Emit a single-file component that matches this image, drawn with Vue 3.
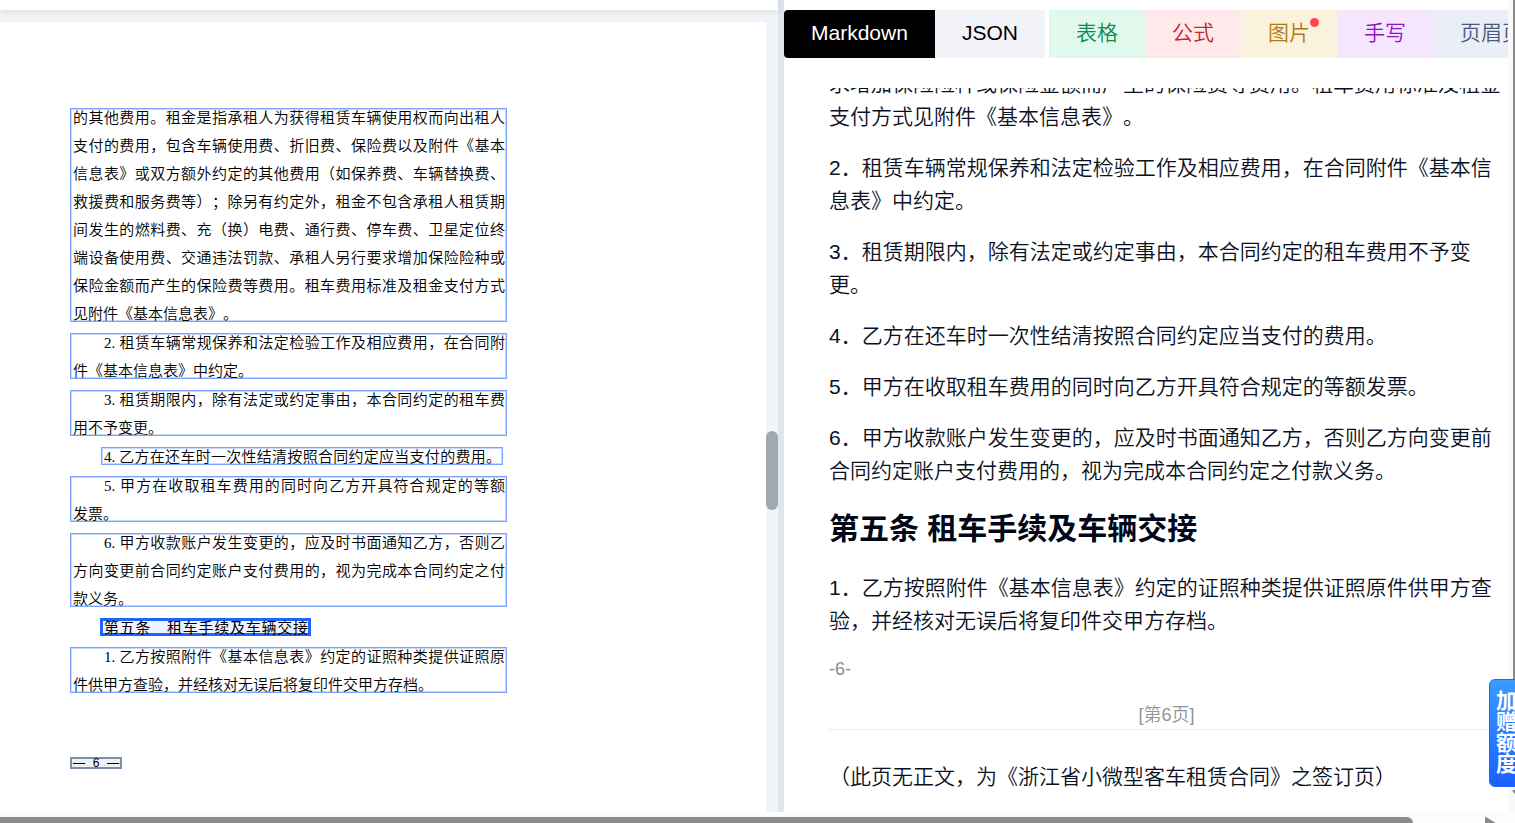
<script setup>
const blocks = [
  {
    kind: 'para',
    lines: [
      '的其他费用。租金是指承租人为获得租赁车辆使用权而向出租人',
      '支付的费用，包含车辆使用费、折旧费、保险费以及附件《基本',
      '信息表》或双方额外约定的其他费用（如保养费、车辆替换费、',
      '救援费和服务费等）；除另有约定外，租金不包含承租人租赁期',
      '间发生的燃料费、充（换）电费、通行费、停车费、卫星定位终',
      '端设备使用费、交通违法罚款、承租人另行要求增加保险险种或',
      '保险金额而产生的保险费等费用。租车费用标准及租金支付方式',
      '见附件《基本信息表》。',
    ],
  },
  {
    kind: 'para indent',
    lines: ['2. 租赁车辆常规保养和法定检验工作及相应费用，在合同附', '件《基本信息表》中约定。'],
  },
  {
    kind: 'para indent',
    lines: ['3. 租赁期限内，除有法定或约定事由，本合同约定的租车费', '用不予变更。'],
  },
  { kind: 'single', lines: ['4. 乙方在还车时一次性结清按照合同约定应当支付的费用。'] },
  {
    kind: 'para indent',
    lines: ['5. 甲方在收取租车费用的同时向乙方开具符合规定的等额', '发票。'],
  },
  {
    kind: 'para indent',
    lines: [
      '6. 甲方收款账户发生变更的，应及时书面通知乙方，否则乙',
      '方向变更前合同约定账户支付费用的，视为完成本合同约定之付',
      '款义务。',
    ],
  },
  { kind: 'title', lines: ['第五条　租车手续及车辆交接'] },
  {
    kind: 'para indent',
    lines: ['1. 乙方按照附件《基本信息表》约定的证照种类提供证照原', '件供甲方查验，并经核对无误后将复印件交甲方存档。'],
  },
]

const filters = [
  { name: '表格', tone: 'green' },
  { name: '公式', tone: 'red' },
  { name: '图片', tone: 'amber', dot: true },
  { name: '手写', tone: 'purple' },
  { name: '页眉页脚', tone: 'slate' },
]
</script>

<template>
  <div class="app">
    <section class="source">
      <div class="topbar"></div>
      <div class="viewer">
        <div class="sheet">
          <div v-for="(b, i) in blocks" :key="i" class="block" :class="b.kind">
            <div class="lines">
              <div v-for="(l, j) in b.lines" :key="j" class="line">{{ l }}</div>
            </div>
          </div>
          <div class="folio"><span>—</span><span>6</span><span>—</span></div>
        </div>
        <div class="track"><div class="thumb"></div></div>
      </div>
    </section>

    <div class="divider"></div>

    <section class="result">
      <nav class="tabs">
        <button class="tab active" type="button">Markdown</button>
        <button class="tab json" type="button">JSON</button>
        <button v-for="f in filters" :key="f.name" class="tab" :class="f.tone" type="button">
          <span class="label">{{ f.name }}<i v-if="f.dot" class="dot"></i></span>
        </button>
      </nav>
      <div class="scroll">
        <article class="article">
          <p>求增加保险险种或保险金额而产生的保险费等费用。租车费用标准及租金支付方式见附件《基本信息表》。</p>
          <p>2．租赁车辆常规保养和法定检验工作及相应费用，在合同附件《基本信息表》中约定。</p>
          <p>3．租赁期限内，除有法定或约定事由，本合同约定的租车费用不予变更。</p>
          <p>4．乙方在还车时一次性结清按照合同约定应当支付的费用。</p>
          <p>5．甲方在收取租车费用的同时向乙方开具符合规定的等额发票。</p>
          <p>6．甲方收款账户发生变更的，应及时书面通知乙方，否则乙方向变更前合同约定账户支付费用的，视为完成本合同约定之付款义务。</p>
          <h2>第五条 租车手续及车辆交接</h2>
          <p>1．乙方按照附件《基本信息表》约定的证照种类提供证照原件供甲方查验，并经核对无误后将复印件交甲方存档。</p>
          <div class="foot">-6-</div>
          <div class="pagemark">[第6页]</div>
          <p>（此页无正文，为《浙江省小微型客车租赁合同》之签订页）</p>
        </article>
      </div>
    </section>

    <div class="vbar">
      <div class="vthumb"></div>
      <svg class="varrow" width="12" height="7" viewBox="0 0 12 7"><path d="M1 0H11Q12 1 11 2L6 7L1 2Q0 1 1 0Z" fill="#8b8b8b" /></svg>
    </div>
    <div class="hbar">
      <div class="hthumb"></div>
      <svg class="harrow" width="12" height="12" viewBox="0 0 12 12"><path d="M0 0H1L11 6L1 12H0Z" fill="#8b8b8b" /></svg>
    </div>

    <button class="gift" type="button">加赠额度</button>
  </div>
</template>

<style>
body {
  overflow: hidden;
}
</style>

<style scoped>
.app {
  position: relative;
  display: grid;
  grid-template-columns: minmax(0, 778fr) 6px minmax(0, 724fr) 7px;
  grid-template-rows: minmax(0, 1fr) 11px;
  height: 100vh;
  overflow: hidden;
  background: #fff;
  font-family: "Liberation Sans", "Noto Sans CJK SC", sans-serif;
  text-spacing-trim: space-all;
}
.source {
  display: flex;
  flex-direction: column;
  background: #f1f5fa;
}
.topbar {
  position: relative;
  flex: none;
  height: 10px;
  background: #fff;
  box-shadow: 0 1px 8px rgba(0, 0, 0, 0.12);
}
.viewer {
  flex: 1;
  min-height: 0;
  display: flex;
}
.sheet {
  position: relative;
  flex: 1;
  min-width: 0;
  margin-top: 12px;
  padding: 86px 0 0 70px;
  box-sizing: border-box;
  background: #fff;
  overflow: hidden;
  color: #000;
  font-family: "Liberation Serif", "Noto Sans CJK SC", serif;
  font-size: 15px;
  font-weight: 350;
}
.track {
  flex: none;
  width: 12px;
  padding-top: 421px;
  box-sizing: border-box;
}
.thumb {
  height: 79px;
  border-radius: 6px;
  background: #a0a8b2;
}
.block {
  box-sizing: border-box;
  width: 437px;
  margin-bottom: 11px;
  padding: 0 1px 0 2px;
  border: 1px solid #7ba3fb;
  box-shadow: inset 0 0 0 1px #c6d8ff;
}
.lines {
  margin: -5px 0 -7px;
}
.line {
  line-height: 28px;
  white-space: nowrap;
  text-align-last: justify;
}
.para .line:last-child {
  text-align-last: left;
}
.indent .line:first-child {
  padding-left: 31px;
}
.single {
  width: 402px;
  margin-left: 31px;
}
.title {
  width: 211px;
  margin-left: 30px;
  padding: 0 0 0 1px;
  border: 3px solid #1a66ff;
  box-shadow: none;
  background: #eef3ff;
  font-weight: 400;
  font-family: "Noto Sans CJK SC", sans-serif;
}
.title .lines {
  margin: -8px 0;
}
.folio {
  display: flex;
  align-items: center;
  justify-content: space-between;
  box-sizing: border-box;
  width: 52px;
  height: 12px;
  margin-top: 64px;
  padding: 0 1px;
  border: 2px solid #7f8cab;
  background: #eef0f4;
  font-family: "Liberation Sans", sans-serif;
  font-size: 12px;
  line-height: 12px;
  white-space: nowrap;
}
.divider {
  background: #e0e4ec;
}
.result {
  position: relative;
  display: flex;
  flex-direction: column;
  overflow: hidden;
  background: #fff;
}
.tabs {
  flex: none;
  display: flex;
  margin-top: 10px;
  overflow: hidden;
}
.tab {
  flex: none;
  height: 48px;
  padding: 0 27px 2px;
  border: 0;
  font: inherit;
  font-size: 21px;
  line-height: 30px;
  color: #000;
}
.active {
  border-radius: 4px 0 0 4px;
  background: #000;
  color: #fff;
}
.json {
  margin-right: 4px;
  background: #f2f3f9;
}
.label {
  position: relative;
  font-weight: 350;
}
.green {
  background: #e0f9ec;
  color: #0e8a54;
}
.red {
  background: #ffe9ea;
  color: #c3262d;
}
.amber {
  background: #fbf2de;
  color: #b07a08;
}
.purple {
  background: #f5e5ff;
  color: #8718c0;
}
.slate {
  background: #e9eef7;
  color: #4a5a7c;
}
.dot {
  position: absolute;
  top: -3px;
  right: -9px;
  width: 9px;
  height: 9px;
  border-radius: 50%;
  background: #ff4a4c;
}
.scroll {
  flex: 1;
  min-height: 0;
  margin-top: 30px;
  overflow: hidden;
}
.article {
  margin: -21px 4px 0 45px;
  color: #0a1122;
  font-size: 21px;
  line-height: 33px;
  font-weight: 350;
}
.article p {
  margin: 0 0 18px;
}
.article h2 {
  margin: 24px 0 24px;
  color: #020817;
  font-size: 30px;
  line-height: 36px;
  font-weight: 700;
}
.foot {
  color: #868c98;
  font-size: 18px;
  line-height: 28px;
}
.pagemark {
  margin: 18px 0 30px;
  border-bottom: 1px solid #ececef;
  color: #90949c;
  font-size: 18px;
  line-height: 28px;
  text-align: center;
}
.vbar {
  display: flex;
  flex-direction: column;
  align-items: flex-start;
  padding-left: 5px;
  background: #f9f9f9;
  overflow: hidden;
}
.vthumb {
  width: 12px;
  flex: 0 0 780px;
  background: #8b8b8b;
}
.varrow {
  flex: none;
  margin: 10px 0 0 -1px;
}
.hbar {
  grid-column: 1 / -1;
  display: flex;
  justify-content: space-between;
  padding: 5px 18px 0 0;
  background: #fcfcfc;
  overflow: hidden;
}
.hthumb {
  flex: 1;
  height: 12px;
  margin-right: 72px;
  border-radius: 0 6px 6px 0;
  background: #8b8b8b;
}
.harrow {
  flex: none;
}
.gift {
  position: absolute;
  right: -10px;
  bottom: 36px;
  width: 36px;
  height: 108px;
  padding: 0 7px 2px 6px;
  border: 1px solid #1a66ff;
  border-radius: 6px;
  background: linear-gradient(#3b9cff, #1a60ff);
  color: #fff;
  font: inherit;
  font-size: 21px;
  line-height: 21px;
  font-weight: 700;
  word-break: break-all;
}
</style>
